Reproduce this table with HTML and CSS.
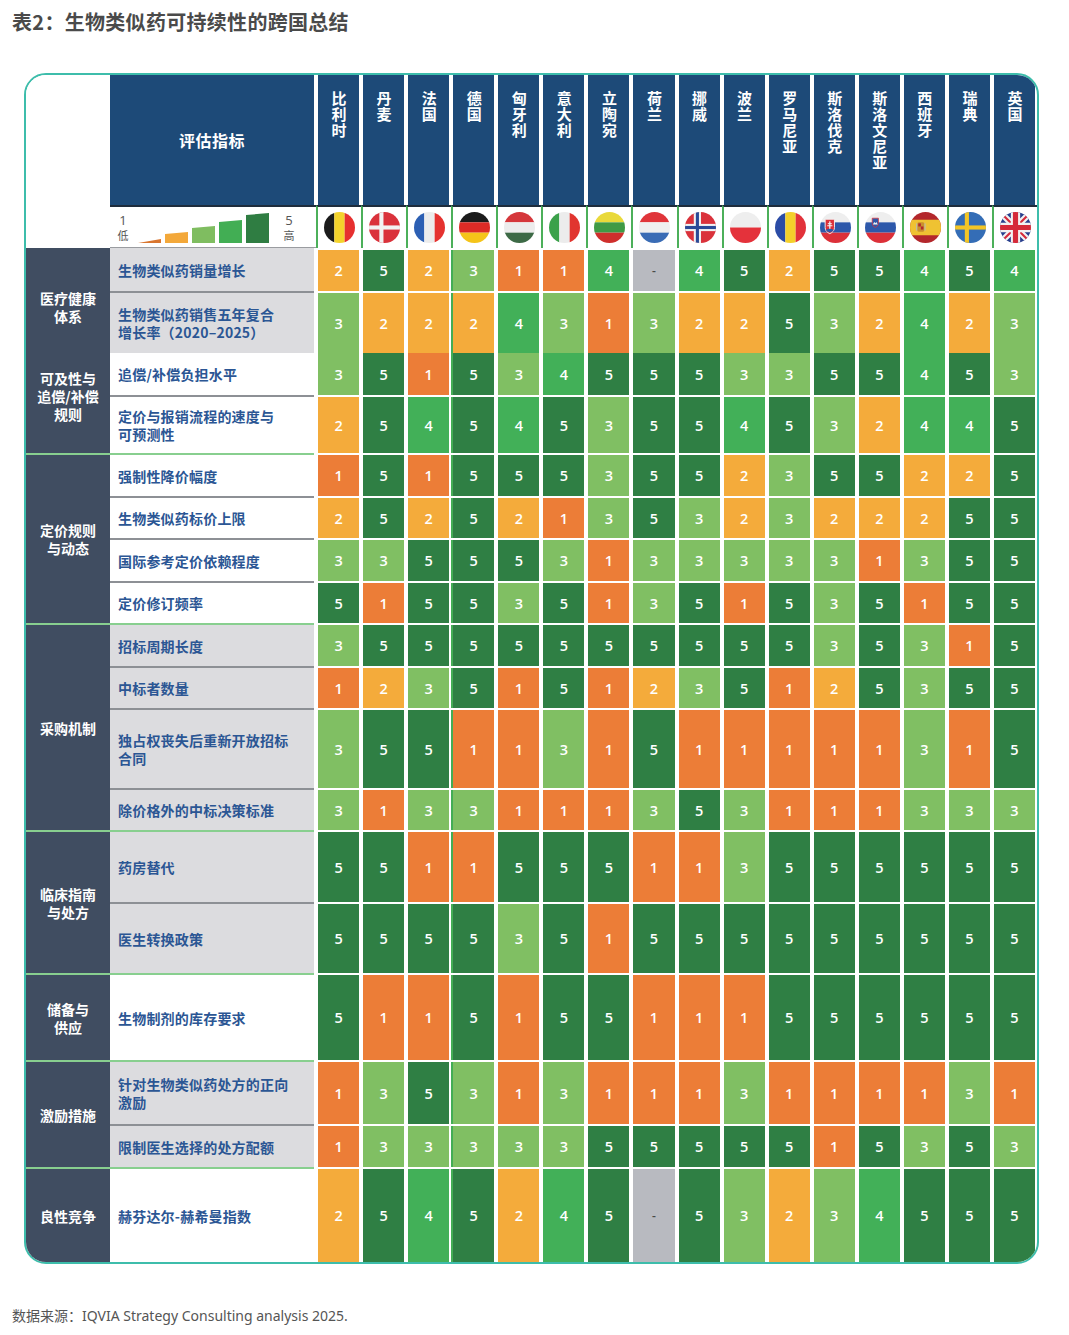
FILE: index.html
```html
<!DOCTYPE html>
<html lang="zh">
<head>
<meta charset="utf-8">
<title>表2：生物类似药可持续性的跨国总结</title>
<link rel="stylesheet" href="styles.css">
</head>
<body>
<h1 class="title">表2：生物类似药可持续性的跨国总结</h1>
<div class="frame">
<div class="grid">
  <div class="row">
    <div class="blank"></div>
    <div class="hm">评估指标</div>
    <div class="hc"><span>比利时</span></div>
    <div class="hc"><span>丹麦</span></div>
    <div class="hc"><span>法国</span></div>
    <div class="hc"><span>德国</span></div>
    <div class="hc"><span>匈牙利</span></div>
    <div class="hc"><span>意大利</span></div>
    <div class="hc"><span>立陶宛</span></div>
    <div class="hc"><span>荷兰</span></div>
    <div class="hc"><span>挪威</span></div>
    <div class="hc"><span>波兰</span></div>
    <div class="hc"><span>罗马尼亚</span></div>
    <div class="hc"><span>斯洛伐克</span></div>
    <div class="hc"><span>斯洛文尼亚</span></div>
    <div class="hc"><span>西班牙</span></div>
    <div class="hc"><span>瑞典</span></div>
    <div class="hc"><span>英国</span></div>
  </div>
  <div class="row">
    <div class="blank"></div>
    <div class="legend">
      <div class="lg"><span class="lg-n">1</span><span class="lg-t">低</span></div>
      <svg class="ramp" width="134" height="30" viewBox="0 0 134 30">
        <polygon points="0,30 23,26 23,30" fill="#d9762f"/>
        <polygon points="27,30 27,21 50,19 50,30" fill="#f3a83a"/>
        <polygon points="54,30 54,15 77,13 77,30" fill="#7fbd60"/>
        <polygon points="81,30 81,9 104,7 104,30" fill="#42ae54"/>
        <polygon points="108,30 108,2 131,0 131,30" fill="#2f7d42"/>
      </svg>
      <div class="lg"><span class="lg-n">5</span><span class="lg-t">高</span></div>
    </div>
    <div class="fc"><span class="flag"><svg viewBox="0 0 30 30"><rect width="10" height="30" fill="#1b1b1b"/><rect x="10" width="10" height="30" fill="#f4d32c"/><rect x="20" width="10" height="30" fill="#e6302f"/></svg></span></div>
    <div class="fc"><span class="flag"><svg viewBox="0 0 30 30"><rect width="30" height="30" fill="#da323b"/><rect x="10" width="4" height="30" fill="#f2f2f2"/><rect y="13" width="30" height="4" fill="#f2f2f2"/></svg></span></div>
    <div class="fc"><span class="flag"><svg viewBox="0 0 30 30"><rect width="10" height="30" fill="#2c5fb3"/><rect x="10" width="10" height="30" fill="#ececec"/><rect x="20" width="10" height="30" fill="#e5322f"/></svg></span></div>
    <div class="fc"><span class="flag"><svg viewBox="0 0 30 30"><rect width="30" height="10" fill="#1b1b1b"/><rect y="10" width="30" height="10" fill="#dc2b26"/><rect y="20" width="30" height="10" fill="#f5c419"/></svg></span></div>
    <div class="fc"><span class="flag"><svg viewBox="0 0 30 30"><rect width="30" height="10" fill="#d5373b"/><rect y="10" width="30" height="10" fill="#ececec"/><rect y="20" width="30" height="10" fill="#3d6a46"/></svg></span></div>
    <div class="fc"><span class="flag"><svg viewBox="0 0 30 30"><rect width="10" height="30" fill="#3ba14a"/><rect x="10" width="10" height="30" fill="#ececec"/><rect x="20" width="10" height="30" fill="#e1352f"/></svg></span></div>
    <div class="fc"><span class="flag"><svg viewBox="0 0 30 30"><rect width="30" height="10" fill="#e9d93a"/><rect y="10" width="30" height="10" fill="#3f9a45"/><rect y="20" width="30" height="10" fill="#cf2f2c"/></svg></span></div>
    <div class="fc"><span class="flag"><svg viewBox="0 0 30 30"><rect width="30" height="10" fill="#e0353a"/><rect y="10" width="30" height="10" fill="#efefef"/><rect y="20" width="30" height="10" fill="#3a6cb5"/></svg></span></div>
    <div class="fc"><span class="flag"><svg viewBox="0 0 30 30"><rect width="30" height="30" fill="#da323b"/><rect x="8.5" width="7" height="30" fill="#f2f2f2"/><rect y="11.5" width="30" height="7" fill="#f2f2f2"/><rect x="10.5" width="3" height="30" fill="#2a4a97"/><rect y="13.5" width="30" height="3" fill="#2a4a97"/></svg></span></div>
    <div class="fc"><span class="flag"><svg viewBox="0 0 30 30"><rect width="30" height="15" fill="#eeeeee"/><rect y="15" width="30" height="15" fill="#e4323b"/></svg></span></div>
    <div class="fc"><span class="flag"><svg viewBox="0 0 30 30"><rect width="10" height="30" fill="#2b4ca6"/><rect x="10" width="10" height="30" fill="#f4d02b"/><rect x="20" width="10" height="30" fill="#e2323a"/></svg></span></div>
    <div class="fc"><span class="flag"><svg viewBox="0 0 30 30"><rect width="30" height="10" fill="#eeeeee"/><rect y="10" width="30" height="10" fill="#2d58aa"/><rect y="20" width="30" height="10" fill="#dc3039"/><path d="M5 7H14V15Q14 19 9.5 21Q5 19 5 15Z" fill="#dc3039" stroke="#f2f2f2" stroke-width="0.9"/><rect x="8.9" y="9" width="1.2" height="8" fill="#f2f2f2"/><rect x="7.6" y="10.8" width="3.8" height="1" fill="#f2f2f2"/><rect x="7" y="12.8" width="5" height="1" fill="#f2f2f2"/><path d="M6 17.2Q9.5 15.2 13 17.2V18Q9.5 21 6 18Z" fill="#2d58aa"/></svg></span></div>
    <div class="fc"><span class="flag"><svg viewBox="0 0 30 30"><rect width="30" height="10" fill="#eeeeee"/><rect y="10" width="30" height="10" fill="#2d58aa"/><rect y="20" width="30" height="10" fill="#dc3039"/><path d="M7 6H13V11Q13 14 10 15Q7 14 7 11Z" fill="#2d58aa" stroke="#dc3039" stroke-width="0.7"/><path d="M7.6 12L9 9.6L10 11L11 9.6L12.4 12Z" fill="#f2f2f2"/></svg></span></div>
    <div class="fc"><span class="flag"><svg viewBox="0 0 30 30"><rect width="30" height="30" fill="#b3272c"/><rect y="7.5" width="30" height="15" fill="#efc232"/><rect x="7" y="10" width="7" height="9" rx="1.5" fill="#c9902e"/><rect x="8" y="11" width="2.5" height="3" fill="#b3272c"/><rect x="10.5" y="14" width="2.5" height="3" fill="#b3272c"/><rect x="6" y="11" width="1" height="7" fill="#b9b9b9"/><rect x="14" y="11" width="1" height="7" fill="#b9b9b9"/></svg></span></div>
    <div class="fc"><span class="flag"><svg viewBox="0 0 30 30"><rect width="30" height="30" fill="#346db6"/><rect x="9.5" width="4" height="30" fill="#f3c526"/><rect y="13" width="30" height="4" fill="#f3c526"/></svg></span></div>
    <div class="fc"><span class="flag"><svg viewBox="0 0 30 30"><rect width="30" height="30" fill="#283f8d"/><path d="M0 0L30 30M30 0L0 30" stroke="#f2f2f2" stroke-width="6"/><path d="M0 0L30 30M30 0L0 30" stroke="#d52a3a" stroke-width="2"/><path d="M15 0V30M0 15H30" stroke="#f2f2f2" stroke-width="9"/><path d="M15 0V30M0 15H30" stroke="#d52a3a" stroke-width="5"/></svg></span></div>
  </div>

  <div class="row">
    <div class="cat span2 cat-g1">医疗健康<br>体系</div>
    <div class="m gray">生物类似药销量增长</div>
    <i class="s s2">2</i><i class="s s5">5</i><i class="s s2">2</i><i class="s s3 de">3</i><i class="s s1">1</i><i class="s s1">1</i><i class="s s4">4</i><i class="s sx">-</i><i class="s s4">4</i><i class="s s5">5</i><i class="s s2">2</i><i class="s s5">5</i><i class="s s5">5</i><i class="s s4">4</i><i class="s s5">5</i><i class="s s4">4</i>
  </div>
  <div class="row">
    <div class="m gray sep">生物类似药销售五年复合<br>增长率（2020–2025）</div>
    <i class="s s3">3</i><i class="s s2">2</i><i class="s s2">2</i><i class="s s2 de">2</i><i class="s s4">4</i><i class="s s3">3</i><i class="s s1">1</i><i class="s s3">3</i><i class="s s2">2</i><i class="s s2">2</i><i class="s s5">5</i><i class="s s3">3</i><i class="s s2">2</i><i class="s s4">4</i><i class="s s2">2</i><i class="s s3">3</i>
  </div>

  <div class="row nt">
    <div class="cat span2 cat-g2">可及性与<br>追偿/补偿<br>规则</div>
    <div class="m">追偿/补偿负担水平</div>
    <i class="s s3">3</i><i class="s s5">5</i><i class="s s1">1</i><i class="s s5 de">5</i><i class="s s3">3</i><i class="s s4">4</i><i class="s s5">5</i><i class="s s5">5</i><i class="s s5">5</i><i class="s s3">3</i><i class="s s3">3</i><i class="s s5">5</i><i class="s s5">5</i><i class="s s4">4</i><i class="s s5">5</i><i class="s s3">3</i>
  </div>
  <div class="row">
    <div class="m sep">定价与报销流程的速度与<br>可预测性</div>
    <i class="s s2">2</i><i class="s s5">5</i><i class="s s4">4</i><i class="s s5 de">5</i><i class="s s4">4</i><i class="s s5">5</i><i class="s s3">3</i><i class="s s5">5</i><i class="s s5">5</i><i class="s s4">4</i><i class="s s5">5</i><i class="s s3">3</i><i class="s s2">2</i><i class="s s4">4</i><i class="s s4">4</i><i class="s s5">5</i>
  </div>

  <div class="row">
    <div class="cat span4 gs">定价规则<br>与动态</div>
    <div class="m gs">强制性降价幅度</div>
    <i class="s s1">1</i><i class="s s5">5</i><i class="s s1">1</i><i class="s s5 de">5</i><i class="s s5">5</i><i class="s s5">5</i><i class="s s3">3</i><i class="s s5">5</i><i class="s s5">5</i><i class="s s2">2</i><i class="s s3">3</i><i class="s s5">5</i><i class="s s5">5</i><i class="s s2">2</i><i class="s s2">2</i><i class="s s5">5</i>
  </div>
  <div class="row">
    <div class="m sep">生物类似药标价上限</div>
    <i class="s s2">2</i><i class="s s5">5</i><i class="s s2">2</i><i class="s s5 de">5</i><i class="s s2">2</i><i class="s s1">1</i><i class="s s3">3</i><i class="s s5">5</i><i class="s s3">3</i><i class="s s2">2</i><i class="s s3">3</i><i class="s s2">2</i><i class="s s2">2</i><i class="s s2">2</i><i class="s s5">5</i><i class="s s5">5</i>
  </div>
  <div class="row">
    <div class="m sep">国际参考定价依赖程度</div>
    <i class="s s3">3</i><i class="s s3">3</i><i class="s s5">5</i><i class="s s5 de">5</i><i class="s s5">5</i><i class="s s3">3</i><i class="s s1">1</i><i class="s s3">3</i><i class="s s3">3</i><i class="s s3">3</i><i class="s s3">3</i><i class="s s3">3</i><i class="s s1">1</i><i class="s s3">3</i><i class="s s5">5</i><i class="s s5">5</i>
  </div>
  <div class="row">
    <div class="m sep">定价修订频率</div>
    <i class="s s5">5</i><i class="s s1">1</i><i class="s s5">5</i><i class="s s5 de">5</i><i class="s s3">3</i><i class="s s5">5</i><i class="s s1">1</i><i class="s s3">3</i><i class="s s5">5</i><i class="s s1">1</i><i class="s s5">5</i><i class="s s3">3</i><i class="s s5">5</i><i class="s s1">1</i><i class="s s5">5</i><i class="s s5">5</i>
  </div>

  <div class="row">
    <div class="cat span4 gs">采购机制</div>
    <div class="m gray gs">招标周期长度</div>
    <i class="s s3">3</i><i class="s s5">5</i><i class="s s5">5</i><i class="s s5 de">5</i><i class="s s5">5</i><i class="s s5">5</i><i class="s s5">5</i><i class="s s5">5</i><i class="s s5">5</i><i class="s s5">5</i><i class="s s5">5</i><i class="s s3">3</i><i class="s s5">5</i><i class="s s3">3</i><i class="s s1">1</i><i class="s s5">5</i>
  </div>
  <div class="row">
    <div class="m gray sep">中标者数量</div>
    <i class="s s1">1</i><i class="s s2">2</i><i class="s s3">3</i><i class="s s5 de">5</i><i class="s s1">1</i><i class="s s5">5</i><i class="s s1">1</i><i class="s s2">2</i><i class="s s3">3</i><i class="s s5">5</i><i class="s s1">1</i><i class="s s2">2</i><i class="s s5">5</i><i class="s s3">3</i><i class="s s5">5</i><i class="s s5">5</i>
  </div>
  <div class="row">
    <div class="m gray sep">独占权丧失后重新开放招标<br>合同</div>
    <i class="s s3">3</i><i class="s s5">5</i><i class="s s5">5</i><i class="s s1 de">1</i><i class="s s1">1</i><i class="s s3">3</i><i class="s s1">1</i><i class="s s5">5</i><i class="s s1">1</i><i class="s s1">1</i><i class="s s1">1</i><i class="s s1">1</i><i class="s s1">1</i><i class="s s3">3</i><i class="s s1">1</i><i class="s s5">5</i>
  </div>
  <div class="row">
    <div class="m gray sep">除价格外的中标决策标准</div>
    <i class="s s3">3</i><i class="s s1">1</i><i class="s s3">3</i><i class="s s3 de">3</i><i class="s s1">1</i><i class="s s1">1</i><i class="s s1">1</i><i class="s s3">3</i><i class="s s5">5</i><i class="s s3">3</i><i class="s s1">1</i><i class="s s1">1</i><i class="s s1">1</i><i class="s s3">3</i><i class="s s3">3</i><i class="s s3">3</i>
  </div>

  <div class="row">
    <div class="cat span2 gs">临床指南<br>与处方</div>
    <div class="m gray gs">药房替代</div>
    <i class="s s5">5</i><i class="s s5">5</i><i class="s s1">1</i><i class="s s1 de">1</i><i class="s s5">5</i><i class="s s5">5</i><i class="s s5">5</i><i class="s s1">1</i><i class="s s1">1</i><i class="s s3">3</i><i class="s s5">5</i><i class="s s5">5</i><i class="s s5">5</i><i class="s s5">5</i><i class="s s5">5</i><i class="s s5">5</i>
  </div>
  <div class="row">
    <div class="m gray sep">医生转换政策</div>
    <i class="s s5">5</i><i class="s s5">5</i><i class="s s5">5</i><i class="s s5 de">5</i><i class="s s3">3</i><i class="s s5">5</i><i class="s s1">1</i><i class="s s5">5</i><i class="s s5">5</i><i class="s s5">5</i><i class="s s5">5</i><i class="s s5">5</i><i class="s s5">5</i><i class="s s5">5</i><i class="s s5">5</i><i class="s s5">5</i>
  </div>

  <div class="row">
    <div class="cat gs">储备与<br>供应</div>
    <div class="m gs">生物制剂的库存要求</div>
    <i class="s s5">5</i><i class="s s1">1</i><i class="s s1">1</i><i class="s s5 de">5</i><i class="s s1">1</i><i class="s s5">5</i><i class="s s5">5</i><i class="s s1">1</i><i class="s s1">1</i><i class="s s1">1</i><i class="s s5">5</i><i class="s s5">5</i><i class="s s5">5</i><i class="s s5">5</i><i class="s s5">5</i><i class="s s5">5</i>
  </div>

  <div class="row">
    <div class="cat span2 gs">激励措施</div>
    <div class="m gray gs">针对生物类似药处方的正向<br>激励</div>
    <i class="s s1">1</i><i class="s s3">3</i><i class="s s5">5</i><i class="s s3 de">3</i><i class="s s1">1</i><i class="s s3">3</i><i class="s s1">1</i><i class="s s1">1</i><i class="s s1">1</i><i class="s s3">3</i><i class="s s1">1</i><i class="s s1">1</i><i class="s s1">1</i><i class="s s1">1</i><i class="s s3">3</i><i class="s s1">1</i>
  </div>
  <div class="row">
    <div class="m gray sep">限制医生选择的处方配额</div>
    <i class="s s1">1</i><i class="s s3">3</i><i class="s s3">3</i><i class="s s3 de">3</i><i class="s s3">3</i><i class="s s3">3</i><i class="s s5">5</i><i class="s s5">5</i><i class="s s5">5</i><i class="s s5">5</i><i class="s s5">5</i><i class="s s1">1</i><i class="s s5">5</i><i class="s s3">3</i><i class="s s5">5</i><i class="s s3">3</i>
  </div>

  <div class="row">
    <div class="cat gs">良性竞争</div>
    <div class="m gs">赫芬达尔-赫希曼指数</div>
    <i class="s s2">2</i><i class="s s5">5</i><i class="s s4">4</i><i class="s s5 de">5</i><i class="s s2">2</i><i class="s s4">4</i><i class="s s5">5</i><i class="s sx">-</i><i class="s s5">5</i><i class="s s3">3</i><i class="s s2">2</i><i class="s s3">3</i><i class="s s4">4</i><i class="s s5">5</i><i class="s s5">5</i><i class="s s5">5</i>
  </div>
</div>
</div>
<p class="source">数据来源：IQVIA Strategy Consulting analysis 2025.</p>
</body>
</html>
```

FILE: styles.css
```css
* { box-sizing: border-box; }

body {
  margin: 0;
  background: #ffffff;
  font-family: "Noto Sans", "Noto Sans CJK SC", sans-serif;
}

.title {
  margin: 0;
  padding: 10px 12px 0;
  font-family: "Noto Sans CJK SC", sans-serif;
  font-size: 20px;
  line-height: 24px;
  font-weight: 700;
  color: #4a4a4a;
  letter-spacing: 0.3px;
}

.frame {
  margin: 39px 0 0 24px;
  width: 1015px;
  border: 2px solid #3dbdab;
  border-radius: 22px;
  overflow: hidden;
  background: #ffffff;
}

.grid {
  display: grid;
  grid-template-columns: 84px 206px repeat(16, 1fr);
  grid-template-rows: 130px 43px 43px 62px 42px 58px 43px 42px 43px 42px 43px 42px 80px 42px 72px 71px 87px 64px 43px 95px;
}

.row { display: contents; }

.blank { grid-column: 1; background: #ffffff; }

/* header */
.hm {
  grid-column: 2;
  margin-right: 2px;
  background: #1d4a78;
  color: #ffffff;
  font-family: "Noto Sans CJK SC", sans-serif;
  font-weight: 700;
  font-size: 16px;
  display: flex;
  align-items: center;
  justify-content: center;
  letter-spacing: 0.5px;
}

.hc {
  margin: 0 2px;
  background: #1d4a78;
  display: flex;
  justify-content: center;
  padding-top: 16px;
}

.hc span {
  writing-mode: vertical-rl;
  text-orientation: upright;
  color: #ffffff;
  font-family: "Noto Sans CJK SC", sans-serif;
  font-weight: 700;
  font-size: 15px;
  letter-spacing: 1px;
  line-height: 16px;
}

/* flag / legend row */
.legend {
  grid-column: 2;
  border-top: 2px solid #1e2c3c;
  border-bottom: 1px solid #9a9ca0;
  display: flex;
  align-items: center;
  padding-left: 6px;
  color: #555555;
}

.lg {
  display: flex;
  flex-direction: column;
  align-items: center;
  width: 14px;
}

.lg-n {
  font-family: "Open Sans", sans-serif;
  font-size: 13px;
  line-height: 16px;
}

.lg-t {
  font-family: "Noto Sans CJK SC", sans-serif;
  font-size: 11px;
  line-height: 15px;
}

.ramp {
  display: block;
  margin: 2px 10px 0 8px;
}

.fc {
  border-top: 2px solid #1e2c3c;
  border-left: 2px solid #4cb05a;
  display: flex;
  align-items: center;
  justify-content: center;
  background: #ffffff;
}

.flag {
  display: block;
  width: 31px;
  height: 31px;
  border-radius: 50%;
  overflow: hidden;
}

.flag svg {
  display: block;
  width: 31px;
  height: 31px;
}

/* category column */
.cat {
  grid-column: 1;
  background: #404d61;
  color: #ffffff;
  font-family: "Noto Sans CJK SC", sans-serif;
  font-weight: 700;
  font-size: 14px;
  line-height: 18px;
  text-align: center;
  display: flex;
  align-items: center;
  justify-content: center;
}

.span2 { grid-row: span 2; }
.span4 { grid-row: span 4; }
.cat-g1 { padding-top: 12px; }
.cat-g2 { padding-bottom: 14px; }

/* metric column */
.m {
  grid-column: 2;
  margin-right: 2px;
  padding-left: 8px;
  display: flex;
  align-items: center;
  background: #ffffff;
  color: #2b5694;
  font-family: "Noto Sans CJK SC", sans-serif;
  font-weight: 700;
  font-size: 14px;
  line-height: 18px;
  letter-spacing: 0.2px;
}

.m.gray { background: #dcdcdf; }
.m.sep { border-top: 2px solid #8d9095; }
.gs { border-top: 2px solid #88cf8f; }

/* score cells */
.s {
  margin: 2px 2px 0;
  display: flex;
  align-items: center;
  justify-content: center;
  color: #ffffff;
  font-style: normal;
  font-family: "Open Sans", sans-serif;
  font-weight: 600;
  font-size: 14.5px;
}

.nt .s { margin-top: 0; }

.s1 { background: #ec7d37; }
.s2 { background: #f4ab3b; }
.s3 { background: #80bf63; }
.s4 { background: #42b058; }
.s5 { background: #2f7f44; }
.sx { background: #b8bac0; color: #4a4a4a; font-size: 12px; }

.s.de {
  margin-left: 0;
  border-left: 2px solid #43ad55;
}

.source {
  margin: 42px 0 0 12px;
  font-family: "Noto Sans", "Noto Sans CJK SC", sans-serif;
  font-size: 14px;
  line-height: 20px;
  color: #555555;
}
```
